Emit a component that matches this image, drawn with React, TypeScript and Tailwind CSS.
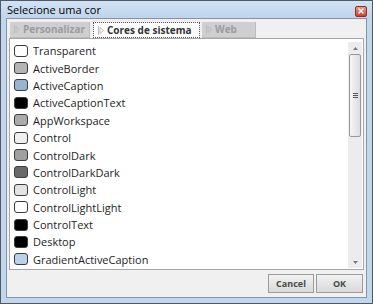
import { X } from 'lucide-react';

const colors = [
  { name: 'Transparent', hex: '#ffffff' },
  { name: 'ActiveBorder', hex: '#b4b4b4' },
  { name: 'ActiveCaption', hex: '#99b4d1' },
  { name: 'ActiveCaptionText', hex: '#000000' },
  { name: 'AppWorkspace', hex: '#ababab' },
  { name: 'Control', hex: '#f0f0f0' },
  { name: 'ControlDark', hex: '#a0a0a0' },
  { name: 'ControlDarkDark', hex: '#696969' },
  { name: 'ControlLight', hex: '#e3e3e3' },
  { name: 'ControlLightLight', hex: '#ffffff' },
  { name: 'ControlText', hex: '#000000' },
  { name: 'Desktop', hex: '#000000' },
  { name: 'GradientActiveCaption', hex: '#b9d1ea' },
];

function TabArrow() {
  return (
    <svg width="6" height="9" viewBox="0 0 6 9" className="shrink-0">
      <line x1="0.5" y1="0" x2="0.5" y2="9" stroke="#bcbcbc" strokeWidth="1" />
      <path d="M2 1.5 L5.5 4.5 L2 7.5 Z" fill="none" stroke="#bcbcbc" strokeWidth="1" />
    </svg>
  );
}

function Tab(props: { label: string; active?: boolean; width: string }) {
  return (
    <div
      className={
        'flex items-center gap-[3px] h-[16px] pl-[4px] text-[10px] font-bold ' +
        props.width +
        (props.active
          ? ' bg-white border border-dotted border-[#555] text-[#333]'
          : ' bg-[#cfcfcf] border-r border-b border-[#bdbdbd] text-[#9c9c9c]')
      }
    >
      <TabArrow />
      <span>{props.label}</span>
    </div>
  );
}

export default function App() {
  return (
    <div
      className="w-[373px] h-[304px] bg-[#c2d6ed] border border-[#4d5a66] flex flex-col"
      style={{ fontFamily: '"Open Sans", "Noto Sans", sans-serif' }}
    >
      {/* title bar */}
      <div className="h-[17px] flex items-center justify-between pl-[6px] pr-[5px] bg-gradient-to-b from-[#d2e2f3] to-[#bfd4eb]">
        <span className="text-[11px] text-black leading-none">Selecione uma cor</span>
        <div className="w-[12px] h-[11px] mt-[3px] rounded-[2px] bg-gradient-to-b from-[#e59a86] to-[#c6432d] border border-[#8a3224] flex items-center justify-center">
          <X className="w-[8px] h-[8px] text-white" strokeWidth={4} />
        </div>
      </div>

      {/* client */}
      <div className="flex-1 mx-[5px] mb-[5px] bg-[#f0f0f0] border border-[#8295ab] flex flex-col px-[2px] pt-[2px]">
        <div className="flex items-end h-[17px] pl-[1px]">
          <Tab label="Personalizar" width="w-[80px]" />
          <div className="w-[3px]" />
          <Tab label="Cores de sistema" width="w-[107px]" active />
          <div className="w-[2px]" />
          <Tab label="Web" width="w-[54px]" />
        </div>

        {/* list */}
        <div className="h-[232px] bg-white border border-[#a6a6a6] flex">
          <div className="flex-1 overflow-hidden pt-[3px]">
            {colors.map((c) => (
              <div key={c.name} className="h-[17.4px] flex items-center pl-[4px]">
                <div
                  className="w-[14px] h-[12px] rounded-[3px] border border-[#3c3c3c] shrink-0"
                  style={{ backgroundColor: c.hex }}
                />
                <span className="ml-[5px] text-[11px] text-[#1e1e1e] leading-none">{c.name}</span>
              </div>
            ))}
          </div>

          {/* scrollbar */}
          <div className="w-[14px] mt-[3px] mb-[1px] mr-[1px] bg-[#ececec] flex flex-col items-center">
            <div className="h-[12px] flex items-center justify-center">
              <svg width="5" height="3" viewBox="0 0 5 3">
                <path d="M0 3 L2.5 0 L5 3 Z" fill="#7a7a7a" />
              </svg>
            </div>
            <div className="w-[12px] h-[83px] rounded-[2px] border border-[#9a9a9a] bg-gradient-to-r from-[#f5f5f5] to-[#dcdcdc] flex items-center justify-center">
              <svg width="5" height="5" viewBox="0 0 5 5">
                <line x1="0" y1="0.5" x2="5" y2="0.5" stroke="#555" />
                <line x1="0" y1="2.5" x2="5" y2="2.5" stroke="#555" />
                <line x1="0" y1="4.5" x2="5" y2="4.5" stroke="#555" />
              </svg>
            </div>
            <div className="flex-1" />
            <div className="h-[12px] flex items-center justify-center">
              <svg width="5" height="3" viewBox="0 0 5 3">
                <path d="M0 0 L2.5 3 L5 0 Z" fill="#7a7a7a" />
              </svg>
            </div>
          </div>
        </div>

        {/* buttons */}
        <div className="flex justify-end gap-[2px] mt-[4px] pr-[1px]">
          <button className="w-[46px] h-[19px] bg-gradient-to-b from-[#f2f2f2] to-[#d9d9d9] border border-[#9c9c9c] text-[9px] font-bold text-[#4a4a4a]">
            Cancel
          </button>
          <button className="w-[47px] h-[19px] bg-gradient-to-b from-[#f2f2f2] to-[#d9d9d9] border border-[#9c9c9c] text-[9px] font-bold text-[#4a4a4a]">
            OK
          </button>
        </div>
      </div>
    </div>
  );
}
